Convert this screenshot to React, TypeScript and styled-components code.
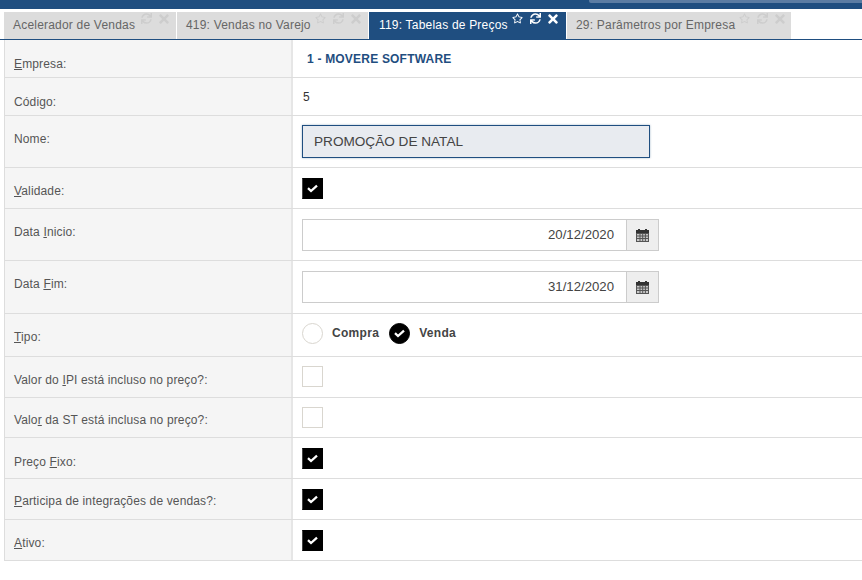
import React from 'react';
import styled, { createGlobalStyle } from 'styled-components';
import { FaRegStar, FaSync, FaTimes } from 'react-icons/fa';

const Global = createGlobalStyle`
  html, body { margin: 0; padding: 0; background: #fff; width: 862px; height: 580px; overflow: hidden; }
  body { font-family: "Liberation Sans", Arial, sans-serif; font-size: 12px; color: #555; }
`;

const Page = styled.div`
  display: flex;
  flex-direction: column;
  width: 862px;
  height: 580px;
`;

const TopBar = styled.div`
  height: 9px;
  background: #1f4e80;
  display: flex;
  justify-content: flex-end;
`;

const TopBarAccent = styled.div`
  width: 273px;
  height: 3px;
  background: #5b7ca3;
  border-bottom-left-radius: 2px;
`;

const TabBar = styled.div`
  display: flex;
  height: 27px;
  margin-top: 3px;
  padding-left: 4px;
  box-sizing: content-box;
  border-bottom: 1px solid #1f4e80;
`;

const Tab = styled.div<{ $active?: boolean; $w: number }>`
  width: ${p => p.$w}px;
  margin-right: 1px;
  display: flex;
  align-items: flex-start;
  box-sizing: border-box;
  padding: 6px 0 0 ${p => (p.$active ? 10 : 9)}px;
  font-size: 12px;
  line-height: 14px;
  letter-spacing: 0.2px;
  background: ${p => (p.$active ? '#1f4e80' : '#dcdcdc')};
  color: ${p => (p.$active ? '#fff' : '#666')};
`;

const TabIcons = styled.div<{ $active?: boolean; $ml: number }>`
  display: flex;
  gap: 7px;
  margin-left: ${p => p.$ml}px;
  margin-top: -5px;
  height: 11px;
  align-items: center;
  color: ${p => (p.$active ? '#fff' : '#cdcdcd')};
`;

const CloseIcon = styled(FaTimes)`
  margin-left: -2px;
`;

const Form = styled.div`
  margin-left: 4px;
  border-left: 1px solid #ddd;
  display: flex;
  flex-direction: column;
`;

const Row = styled.div<{ $h: number }>`
  display: grid;
  grid-template-columns: 288px 1fr;
  height: ${p => p.$h}px;
  box-sizing: border-box;
  border-bottom: 1px solid #ddd;
`;

const Label = styled.div<{ $top: number }>`
  background: #f5f5f5;
  border-right: 2px solid #e6e6e6;
  padding: ${p => p.$top}px 0 0 9px;
  line-height: 14px;
  letter-spacing: 0.14px;
  color: #555;
  box-sizing: border-box;
`;

const Field = styled.div<{ $top: number }>`
  padding: ${p => p.$top}px 0 0 9px;
  display: flex;
  align-items: flex-start;
`;

const Company = styled.span`
  margin-left: 5px;
  font-weight: bold;
  font-size: 12px;
  line-height: 14px;
  letter-spacing: 0.2px;
  color: #1f4e80;
`;

const Code = styled.span`
  margin-left: 1px;
  line-height: 14px;
  color: #333;
`;

const NameInput = styled.div`
  width: 348px;
  height: 33px;
  box-sizing: border-box;
  background: #e8ebf0;
  border: 1px solid #1f4e80;
  box-shadow: 0 0 2px rgba(31, 78, 128, 0.4);
  padding: 0 0 1px 11px;
  display: flex;
  align-items: center;
  font-size: 13.6px;
  color: #444;
`;

const DateGroup = styled.div`
  display: flex;
  width: 357px;
  height: 32px;
  box-sizing: border-box;
  border: 1px solid #ccc;
`;

const DateValue = styled.div`
  flex: 1;
  display: flex;
  align-items: center;
  justify-content: flex-end;
  padding: 0 12px 2px 0;
  font-size: 13.2px;
  color: #444;
`;

const DateAddon = styled.div`
  width: 31px;
  border-left: 1px solid #ccc;
  background: #eee;
  display: flex;
  align-items: center;
  justify-content: center;
`;

const Check = styled.div<{ $on?: boolean; $round?: boolean }>`
  width: 21px;
  height: 21px;
  flex: none;
  box-sizing: border-box;
  border: 1px solid ${p => (p.$on ? '#000' : '#d9d6cf')};
  border-left-color: ${p => (p.$on && !p.$round ? '#444' : p.$on ? '#000' : '#d9d6cf')};
  border-radius: ${p => (p.$round ? '50%' : '0')};
  background: ${p => (p.$on ? '#000' : '#fff')};
  display: flex;
  align-items: center;
  justify-content: center;
`;

const RadioGroup = styled.div`
  display: flex;
  align-items: center;
`;

const RadioText = styled.span<{ $mr: number }>`
  margin-left: 9px;
  margin-right: ${p => p.$mr}px;
  font-weight: bold;
  font-size: 12px;
  letter-spacing: 0.3px;
  color: #444;
  position: relative;
  top: -1px;
`;

const Key = styled.u``;

const tabs = [
  { t: 'Acelerador de Vendas', w: 172, star: false, ml: 6 },
  { t: '419: Vendas no Varejo', w: 191, star: true, ml: 4 },
  { t: '119: Tabelas de Preços', w: 197, star: true, active: true, ml: 4 },
  { t: '29: Parâmetros por Empresa', w: 224, star: true, ml: 4 },
];

const CheckMark = () => (
  <svg width="13" height="9" viewBox="0 0 13 9" fill="none">
    <path d="M2 4.2 5 7 11 1.6" stroke="#fff" strokeWidth="2.3" />
  </svg>
);

const CalendarIcon = () => (
  <svg width="13" height="13" viewBox="0 0 13 13">
    <path d="M2 0h2v1h5V0h2v1h2v3H0V1h2z" fill="#333" />
    <path d="M0 4h13v9H0z" fill="#555" />
    <path d="M1 5h2.5v1.5H1zM4.5 5h1.7v1.5H4.5zM7.2 5h1.7v1.5H7.2zM9.9 5H12v1.5H9.9zM1 7.5h2.5V9H1zM4.5 7.5h1.7V9H4.5zM7.2 7.5h1.7V9H7.2zM9.9 7.5H12V9H9.9zM1 10h2.5v2H1zM4.5 10h1.7v2H4.5zM7.2 10h1.7v2H7.2zM9.9 10H12v2H9.9z" fill="#c8c8c8" />
  </svg>
);

const On = () => <Check $on><CheckMark /></Check>;

const App = () => (
  <Page>
    <Global />
    <TopBar><TopBarAccent /></TopBar>
    <TabBar>
      {tabs.map(tab => (
        <Tab key={tab.t} $active={tab.active} $w={tab.w}>
          {tab.t}
          <TabIcons $active={tab.active} $ml={tab.ml}>
            {tab.star && <FaRegStar size={11} />}
            <FaSync size={11} />
            <CloseIcon size={14} />
          </TabIcons>
        </Tab>
      ))}
    </TabBar>
    <Form>
      <Row $h={38}>
        <Label $top={17}><Key>E</Key>mpresa:</Label>
        <Field $top={12}><Company>1 - MOVERE SOFTWARE</Company></Field>
      </Row>
      <Row $h={38}>
        <Label $top={17}>Código:</Label>
        <Field $top={12}><Code>5</Code></Field>
      </Row>
      <Row $h={52}>
        <Label $top={16}>Nome:</Label>
        <Field $top={9}><NameInput>PROMOÇÃO DE NATAL</NameInput></Field>
      </Row>
      <Row $h={41}>
        <Label $top={16}><Key>V</Key>alidade:</Label>
        <Field $top={10}><On /></Field>
      </Row>
      <Row $h={52}>
        <Label $top={16}>Data <Key>I</Key>nicio:</Label>
        <Field $top={10}>
          <DateGroup><DateValue>20/12/2020</DateValue><DateAddon><CalendarIcon /></DateAddon></DateGroup>
        </Field>
      </Row>
      <Row $h={53}>
        <Label $top={16}>Data <Key>F</Key>im:</Label>
        <Field $top={10}>
          <DateGroup><DateValue>31/12/2020</DateValue><DateAddon><CalendarIcon /></DateAddon></DateGroup>
        </Field>
      </Row>
      <Row $h={43}>
        <Label $top={16}><Key>T</Key>ipo:</Label>
        <Field $top={9}>
          <RadioGroup>
            <Check $round />
            <RadioText $mr={10}>Compra</RadioText>
            <Check $on $round><CheckMark /></Check>
            <RadioText $mr={0}>Venda</RadioText>
          </RadioGroup>
        </Field>
      </Row>
      <Row $h={41}>
        <Label $top={16}>Valor do <Key>I</Key>PI está incluso no preço?:</Label>
        <Field $top={9}><Check /></Field>
      </Row>
      <Row $h={40}>
        <Label $top={15}>Valo<Key>r</Key> da ST está inclusa no preço?:</Label>
        <Field $top={9}><Check /></Field>
      </Row>
      <Row $h={41}>
        <Label $top={17}>Preço <Key>F</Key>ixo:</Label>
        <Field $top={10}><On /></Field>
      </Row>
      <Row $h={41}>
        <Label $top={15}><Key>P</Key>articipa de integrações de vendas?:</Label>
        <Field $top={10}><On /></Field>
      </Row>
      <Row $h={41}>
        <Label $top={16}><Key>A</Key>tivo:</Label>
        <Field $top={10}><On /></Field>
      </Row>
    </Form>
  </Page>
);

export default App;
